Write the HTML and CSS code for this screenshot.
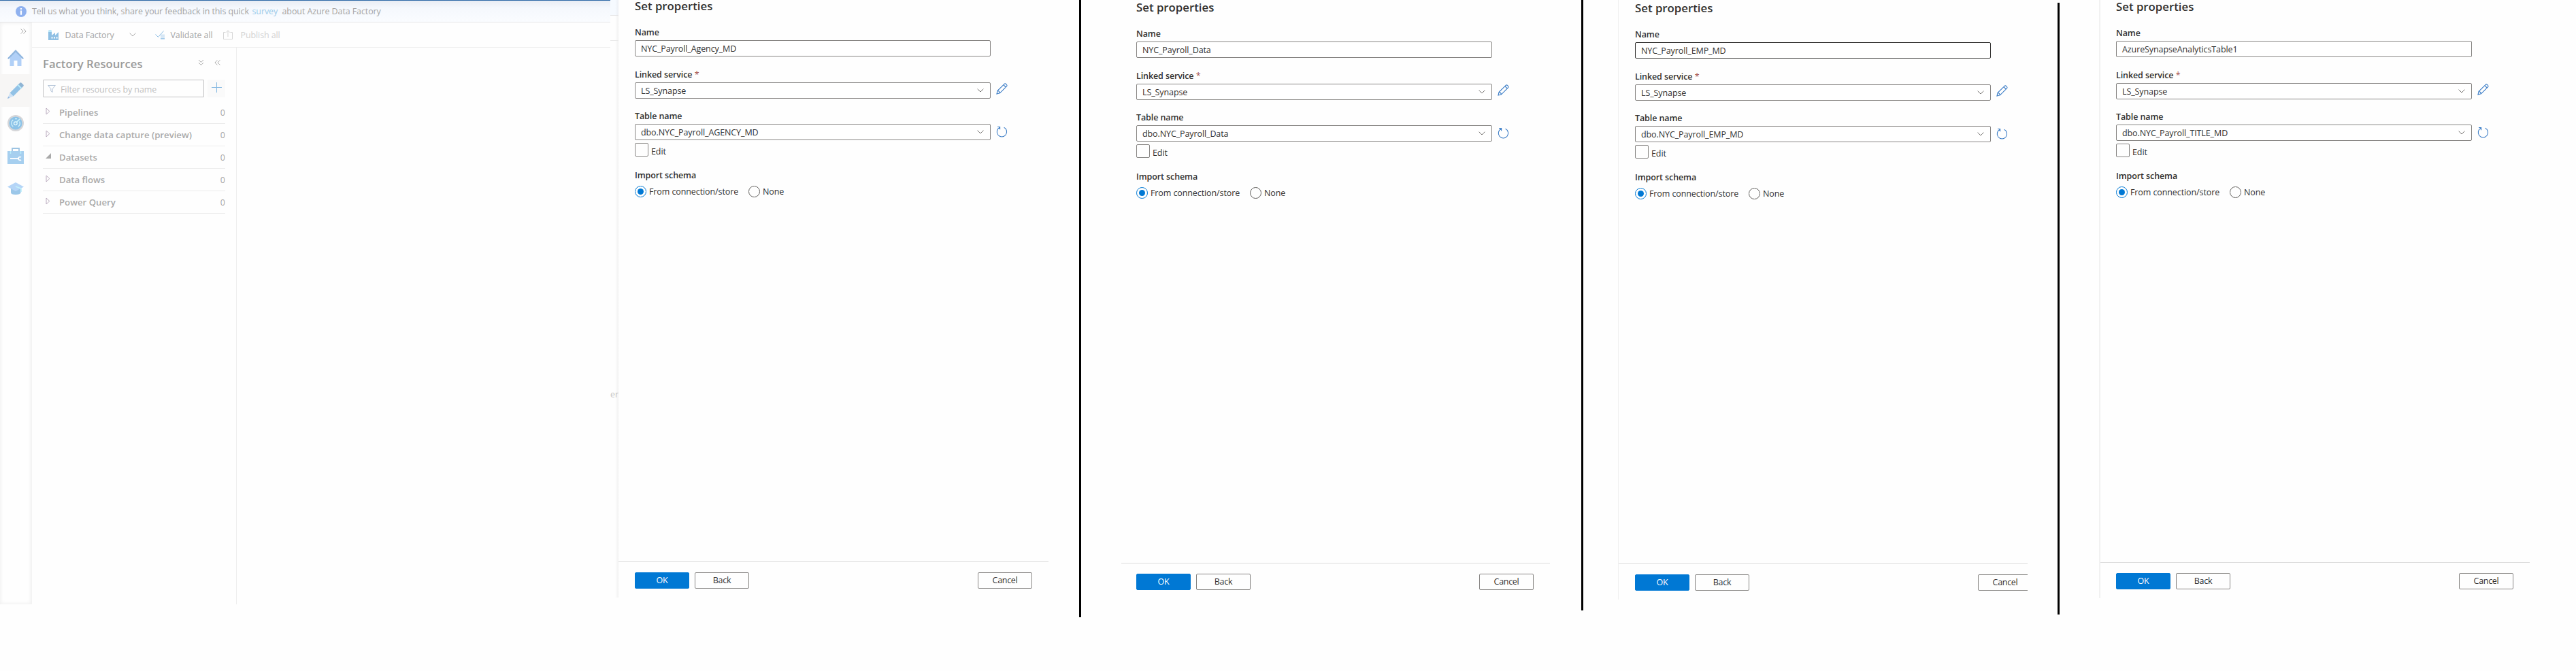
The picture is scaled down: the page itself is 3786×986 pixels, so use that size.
FILE: index.html
```html
<!DOCTYPE html>
<html lang="en">
<head>
<meta charset="utf-8">
<title>Set properties</title>
<link rel="stylesheet" href="styles.css">
</head>
<body>
<svg width="0" height="0" class="defs" aria-hidden="true">
  <symbol id="chev" viewBox="0 0 10 6"><path d="M.6.7 5 5 9.4.7" fill="none" stroke="currentColor"/></symbol>
  <symbol id="dchev" viewBox="0 0 9 8"><path d="M.6.5 4.1 4 .6 7.5M4.6.5 8.1 4 4.6 7.5" fill="none" stroke="currentColor"/></symbol>
  <symbol id="edit" viewBox="0 0 17 17"><path d="M1 16 2.1 11.3 12.2 1.3C13.6-.1 17 2.9 15.6 4.6L5.5 14.8ZM2.1 11.3C3.9 11.6 5.2 12.9 5.5 14.8M10.8 2.7 14.2 6" fill="none" stroke="currentColor" stroke-width="1.1"/></symbol>
  <symbol id="refresh" viewBox="0 0 17 17"><path d="M5.3 2.3A7.2 7.2 0 1 0 11.6 2.3M2 1.5H5.6V5.2" fill="none" stroke="currentColor" stroke-width="1.1"/></symbol>
  <symbol id="tri" viewBox="0 0 7 11"><path d="M1 1 5.8 5.5 1 10Z" fill="none" stroke="currentColor"/></symbol>
</svg>
<main class="board">
  <section class="app">
    <div class="banner">
      <svg class="info" viewBox="0 0 16 16"><circle cx="8" cy="8" r="8" fill="#8fb1ef"/><path d="M8 3v2.1M8 6.4v6.3" stroke="#fff" stroke-width="2.2"/></svg>
      <span class="say">Tell us what you think, share your feedback in this quick</span>
      <a class="survey">survey</a>
      <span class="about">about Azure Data Factory</span>
    </div>
    <div class="work">
      <nav class="rail">
        <div class="expand"><svg width="9" height="8"><use href="#dchev"/></svg></div>
        <div class="item"><svg viewBox="0 0 24 24"><path d="M4 11 12 3.500 20.500 11V24H3.500V11Z" fill="#b1d0f7"/><path d="M9.500 16h5v8h-5z" fill="#fff"/><path d="M0 12.500 12 0 24 12.500 22.500 14 12 3.800 1.500 14Z" fill="#92b7df"/></svg></div>
        <div class="item on"><svg viewBox="0 0 24 24"><path d="M3.500 15.500 16.500 2.500 21.500 7.500 8.500 20.500Z" fill="#92c2e6"/><path d="M15.300 3.700 18.300.700Q19.300-.300 20.500.700L23.300 3.500Q24.300 4.600 23.300 5.700L20.300 8.700Z" fill="#8fb4d4"/><path d="M14.600 4.400 16 3 21 8 19.600 9.400Z" fill="#b5eafb"/><path d="M3.500 15.500 8.500 20.500 0 24Z" fill="#cfe2f4"/><path d="M1.200 20.800 3.300 22.800 0 24Z" fill="#92b7df"/></svg></div>
        <div class="item"><svg viewBox="0 0 24 24"><circle cx="12" cy="12" r="12" fill="#d5d6d9"/><circle cx="12" cy="12" r="9.600" fill="#8cc3e8"/><path d="M8.300 17A6.300 6.300 0 0 1 8.300 7M15.800 17A6.300 6.300 0 0 0 17.600 9.400M11 5.700H14" fill="none" stroke="#d4f2fb" stroke-width="1.300"/><circle cx="11.800" cy="12.300" r="2.300" fill="none" stroke="#e2f7fd" stroke-width="1.400"/><path d="M13 10.800 18.300 5.800" stroke="#c7f1fc" stroke-width="1.800"/></svg></div>
        <div class="item"><svg viewBox="0 0 24 24"><path d="M7 5V1H17V5" fill="none" stroke="#9cc3e2" stroke-width="1.800"/><path d="M0 5H24V24H0Z" fill="#a6cfef"/><path d="M4.500 5V9M19.500 5V9" stroke="#b9ecfb" stroke-width="1.500"/><path d="M4 16H17" stroke="#fff" stroke-width="1.800"/><path d="M20 14.200A2.400 2.400 0 1 0 20 17.800" fill="none" stroke="#fff" stroke-width="1.600"/></svg></div>
        <div class="item"><svg viewBox="0 0 24 24"><path d="M5 11V18Q5 21 12 21T19.500 18V11Z" fill="#9bc7e9"/><path d="M0 9.500 12 3 24 9.500 12 16Z" fill="#b5d5f7"/><path d="M12 9 20 12V17" fill="none" stroke="#c3f0fb" stroke-width="1.800"/></svg></div>
      </nav>
      <div class="studio">
        <div class="toolbar">
          <svg class="factory" viewBox="0 0 16 15"><path d="M0 15V1Q2.500-.500 5 1V8L10 4V8L15 3V15Z" fill="#8fc0e4"/><path d="M0 1Q2.500-.800 5 1V3H0Z" fill="#bdeafa"/><path d="M4.500 10.500H6.500V12.500H4.500ZM8 10.500H10V12.500H8ZM11.500 10.500H13.500V12.500H11.500Z" fill="#fff"/></svg>
          <span class="t-df">Data Factory</span>
          <svg class="t-chev" width="10" height="6"><use href="#chev"/></svg>
          <svg class="check" viewBox="0 0 15 13"><path d="M.500 5.500 4.500 9.500 12.500.500" fill="none" stroke="#85b9e2"/><path d="M8 6.500H14M8 9.200H14M8 11.900H14" stroke="#85b9e2" stroke-width="1.100"/></svg>
          <span class="t-va">Validate all</span>
          <svg class="publish" viewBox="0 0 14 14"><path d="M3.500 3.500H.500V13.500H13.500V3.500H10.500M7 10V.800M4 3.800 7 .800 10 3.800" fill="none" stroke="#d6d6d6"/></svg>
          <span class="t-pa">Publish all</span>
        </div>
        <div class="resources">
          <div class="res-head">
            <h2>Factory Resources</h2>
            <svg class="down" width="9" height="8"><use href="#dchev"/></svg>
            <svg class="back" width="9" height="8"><use href="#dchev"/></svg>
          </div>
          <div class="res-filter">
            <div class="filter"><svg viewBox="0 0 12 11"><path d="M.600.500H11.400L7.200 5.500V10.500L4.800 8.800V5.500Z" fill="none" stroke="#b4c4d8"/></svg><span>Filter resources by name</span></div>
            <div class="add"><svg viewBox="0 0 15 15"><path d="M7.500 0V15M0 7.500H15" stroke="#86b9e2"/></svg></div>
          </div>
          <ul class="tree">
            <li><svg class="tri"><use href="#tri"/></svg><b>Pipelines</b><i>0</i></li>
            <li><svg class="tri"><use href="#tri"/></svg><b>Change data capture (preview)</b><i>0</i></li>
            <li><svg class="open" viewBox="0 0 8 8"><path d="M8 0V8H0Z" fill="#a9a9a9"/></svg><b>Datasets</b><i>0</i></li>
            <li><svg class="tri"><use href="#tri"/></svg><b>Data flows</b><i>0</i></li>
            <li><svg class="tri"><use href="#tri"/></svg><b>Power Query</b><i>0</i></li>
          </ul>
        </div>
      </div>
    </div>
  </section>
  <div class="strip"><div class="strip-top"></div><div class="strip-bar"></div><div class="strip-text">er</div></div>

  <section class="panel p1">
    <h1>Set properties</h1>
    <label>Name</label>
    <div class="row"><div class="field">NYC_Payroll_Agency_MD</div></div>
    <label class="l2">Linked service <em>*</em></label>
    <div class="row"><div class="field">LS_Synapse<svg class="chev"><use href="#chev"/></svg></div><svg class="act edit"><use href="#edit"/></svg></div>
    <label class="l3">Table name</label>
    <div class="row"><div class="field">dbo.NYC_Payroll_AGENCY_MD<svg class="chev"><use href="#chev"/></svg></div><svg class="act"><use href="#refresh"/></svg></div>
    <div class="check-row"><span class="box"></span><span>Edit</span></div>
    <label class="l4">Import schema</label>
    <div class="radios"><span class="radio sel"></span><span class="from">From connection/store</span><span class="radio"></span><span>None</span></div>
    <footer><div class="btn ok">OK</div><div class="btn">Back</div><div class="btn cancel">Cancel</div></footer>
  </section>
  <div class="rule r1"></div>

  <section class="panel p2">
    <h1>Set properties</h1>
    <label>Name</label>
    <div class="row"><div class="field">NYC_Payroll_Data</div></div>
    <label class="l2">Linked service <em>*</em></label>
    <div class="row"><div class="field">LS_Synapse<svg class="chev"><use href="#chev"/></svg></div><svg class="act edit"><use href="#edit"/></svg></div>
    <label class="l3">Table name</label>
    <div class="row"><div class="field">dbo.NYC_Payroll_Data<svg class="chev"><use href="#chev"/></svg></div><svg class="act"><use href="#refresh"/></svg></div>
    <div class="check-row"><span class="box"></span><span>Edit</span></div>
    <label class="l4">Import schema</label>
    <div class="radios"><span class="radio sel"></span><span class="from">From connection/store</span><span class="radio"></span><span>None</span></div>
    <footer><div class="btn ok">OK</div><div class="btn">Back</div><div class="btn cancel">Cancel</div></footer>
  </section>
  <div class="rule r2"></div>

  <section class="panel p3">
    <h1>Set properties</h1>
    <label>Name</label>
    <div class="row"><div class="field focus">NYC_Payroll_EMP_MD</div></div>
    <label class="l2">Linked service <em>*</em></label>
    <div class="row"><div class="field">LS_Synapse<svg class="chev"><use href="#chev"/></svg></div><svg class="act edit"><use href="#edit"/></svg></div>
    <label class="l3">Table name</label>
    <div class="row"><div class="field">dbo.NYC_Payroll_EMP_MD<svg class="chev"><use href="#chev"/></svg></div><svg class="act"><use href="#refresh"/></svg></div>
    <div class="check-row"><span class="box"></span><span>Edit</span></div>
    <label class="l4">Import schema</label>
    <div class="radios"><span class="radio sel"></span><span class="from">From connection/store</span><span class="radio"></span><span>None</span></div>
    <footer><div class="btn ok">OK</div><div class="btn">Back</div><div class="btn cancel">Cancel</div></footer>
  </section>
  <div class="rule r3"></div>

  <section class="panel p4">
    <h1>Set properties</h1>
    <label>Name</label>
    <div class="row"><div class="field">AzureSynapseAnalyticsTable1</div></div>
    <label class="l2">Linked service <em>*</em></label>
    <div class="row"><div class="field">LS_Synapse<svg class="chev"><use href="#chev"/></svg></div><svg class="act edit"><use href="#edit"/></svg></div>
    <label class="l3">Table name</label>
    <div class="row"><div class="field">dbo.NYC_Payroll_TITLE_MD<svg class="chev"><use href="#chev"/></svg></div><svg class="act"><use href="#refresh"/></svg></div>
    <div class="check-row"><span class="box"></span><span>Edit</span></div>
    <label class="l4">Import schema</label>
    <div class="radios"><span class="radio sel"></span><span class="from">From connection/store</span><span class="radio"></span><span>None</span></div>
    <footer><div class="btn ok">OK</div><div class="btn">Back</div><div class="btn cancel">Cancel</div></footer>
  </section>
</main>
</body>
</html>
```
FILE: styles.css
```css
* { box-sizing: border-box; }
body { margin: 0; background: #fefefe; color: #323130; font: 12.5px/17px "Open Sans", "Noto Sans", sans-serif; letter-spacing: -0.1px; overflow: hidden; }
.defs { display: block; height: 0; }
.board { display: flex; align-items: flex-start; width: 3786px; height: 986px; white-space: nowrap; overflow: hidden; }
svg { display: block; flex: none; }
h1, h2, ul { margin: 0; padding: 0; }

/* factory studio, dimmed behind the first panel */
.app { width: 897px; height: 888px; flex: none; color: #a5a5a5; }
.banner { display: flex; align-items: center; height: 33px; padding-left: 23px; border-top: 1px solid #2c68a6; border-bottom: 1px solid #e4e4e6; background: linear-gradient(#e9edf4, #f5f8fd 35%, #fafcff); }
.info { width: 16px; height: 16px; margin-right: 8px; }
.say { width: 323.5px; }
.survey { width: 44px; color: #9ccbe9; }
.work { display: flex; height: 855px; }
.rail { width: 47px; flex: none; padding-top: 28px; position: relative; border-right: 1px solid #f3f3f3; box-shadow: inset 0 0 6px #ececec; }
.expand { position: absolute; left: 30px; top: 9px; }
.item { display: flex; align-items: center; justify-content: center; width: 45px; height: 48px; }
.item svg { width: 24px; height: 24px; margin-left: 1px; }
.item.on { background: #f7f6f5; }
.studio { flex: 1; }
.toolbar { display: flex; align-items: center; height: 37px; padding-left: 24px; border-bottom: 1px solid #ededed; }
.factory { width: 16px; height: 15px; margin-right: 8.500px; }
.t-df { width: 94px; }
.t-chev { margin-right: 28px; }
.check { width: 15px; height: 13px; margin-right: 8px; }
.t-va { width: 77.500px; }
.publish { width: 14px; height: 14px; margin-right: 11.500px; }
.t-pa { color: #d2d2d2; }
.resources { width: 301px; height: 818px; padding: 14px 15px 0 16px; border-right: 1px solid #ededed; }
.res-head { display: flex; height: 20px; align-items: center; }
.res-head h2 { width: 228px; font-size: 16.700px; line-height: 20px; font-weight: 600; letter-spacing: 0; color: #9b9b9b; }
.down { transform: rotate(90deg); margin: -4px 15px 0 0; }
.back { transform: scaleX(-1); margin-top: -4px; }
.res-filter { display: flex; gap: 5px; margin-top: 13px; }
.filter { display: flex; align-items: center; width: 237px; height: 26px; padding-left: 6px; border: 1px solid #c2c2c4; border-radius: 1px; color: #c0c0c0; }
.filter svg { width: 12px; height: 11px; margin-right: 7px; }
.filter span { padding-top: 3px; }
.add { display: flex; justify-content: center; width: 26px; height: 26px; padding-top: 4px; background: #fafafa; }
.add svg { width: 15px; height: 15px; }
.tree { list-style: none; margin-top: 6px; }
.tree li { display: flex; align-items: center; width: 268px; height: 33px; padding: 0 0 0 4px; border-bottom: 1px solid #ececec; font-size: 13.200px; letter-spacing: 0; }
.tree b { flex: 1; font-weight: 560; color: #aaa; }
.tree i { font-style: normal; font-size: 12.5px; }
.tri { width: 7px; height: 11px; margin: -4px 13px 0 0; color: #b9aabd; }
.open { width: 8px; height: 8px; margin: -4px 12px 0 0; }

.strip { width: 12px; height: 878px; flex: none; overflow: hidden; color: #c4c4c4; background: linear-gradient(90deg, #fefefe 60%, #f1f1f1); }
.strip-top { height: 23px; border-bottom: 1px solid #e2e2e4; background: linear-gradient(90deg, #f6faff 60%, #eceff4); }
.strip-bar { height: 37px; border-bottom: 1px solid #eaeaea; }
.strip-text { margin-top: 511px; }

/* property panels */
.panel { display: flex; flex-direction: column; flex: none; width: 632px; height: 878px; padding-left: 24px; overflow: hidden; }
h1 { height: 18px; margin-bottom: 21px; font-size: 16.800px; line-height: 18px; font-weight: 600; letter-spacing: 0; flex: none; }
label { height: 17px; margin-bottom: 3px; font-weight: 550; letter-spacing: -0.1px; }
label em { font-style: normal; font-weight: 400; color: #a4504c; }
.l2 { margin-top: 18px; }
.l3 { margin-top: 17px; }
.l4 { margin-top: 19px; margin-bottom: 7px; }
.row { display: flex; align-items: center; height: 24px; }
.field { display: flex; align-items: center; justify-content: space-between; width: 523px; height: 24px; padding: 0 9px 0 8px; border: 1px solid #868482; border-radius: 2px; background: #fff; }
.field.focus { border-color: #323130; }
.chev { width: 10px; height: 6px; color: #706e6c; }
.act { width: 17px; height: 17px; margin: -2px 0 0 8px; color: #3a7cc6; }
.act.edit { margin-top: -6px; }
.check-row { display: flex; height: 20px; margin-top: 4px; line-height: 25px; }
.box { width: 20px; height: 20px; margin-right: 4px; border: 1px solid #868482; border-radius: 2px; }
.radios { display: flex; align-items: center; height: 17px; }
.radio { width: 17px; height: 17px; margin-right: 4px; border: 1px solid #605e5c; border-radius: 50%; }
.radio.sel { display: flex; border-color: #0078d4; }
.radio.sel::after { content: ""; width: 9px; height: 9px; margin: 3px; border-radius: 50%; background: #0078d4; }
.from { width: 146px; }
footer { display: flex; width: 632px; height: 53px; margin: auto 0 0 -24px; padding: 15px 24px 0; gap: 8px; border-top: 1px solid #dcdcdc; flex: none; }
.btn { width: 80px; height: 24px; border: 1px solid #868482; border-radius: 2px; line-height: 22px; text-align: center; letter-spacing: -0.300px; }
.btn.ok { border-color: #0078d4; background: #0078d4; color: #fff; }
.btn.cancel { margin-left: auto; }
.p2 { width: 630px; height: 880px; margin-left: 59px; padding: 2px 0 0 22px; }
.p2 footer { margin-left: -22px; width: 630px; padding: 15px 24px 0 22px; }
.p3 { width: 602px; height: 881px; margin-left: 51px; padding: 3px 0 0 24px; border-left: 1px solid #efefef; }
.p4 { width: 633px; height: 879px; margin-left: 58px; padding: 1px 0 0 23px; border-left: 2px solid #f1f1f1; }
.p4 footer { margin-left: -23px; width: 631px; padding: 15px 24px 0 23px; }
.rule { width: 3px; flex: none; background: #000; }
.r1 { height: 907px; margin-left: 45px; }
.r2 { height: 897px; margin-left: 46px; }
.r3 { height: 899px; margin: 4px 0 0 44px; }
```
